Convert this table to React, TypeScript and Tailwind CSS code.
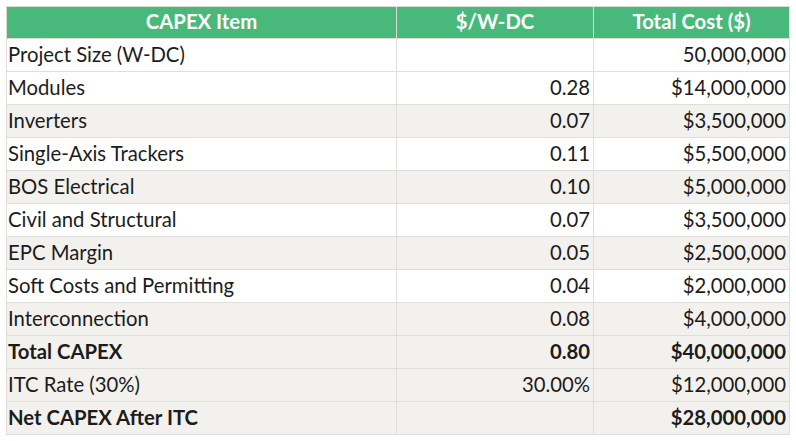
const rows = [
  { item: 'Project Size (W-DC)', rate: '', cost: '50,000,000', shade: false, bold: false },
  { item: 'Modules', rate: '0.28', cost: '$14,000,000', shade: false, bold: false },
  { item: 'Inverters', rate: '0.07', cost: '$3,500,000', shade: true, bold: false },
  { item: 'Single-Axis Trackers', rate: '0.11', cost: '$5,500,000', shade: false, bold: false },
  { item: 'BOS Electrical', rate: '0.10', cost: '$5,000,000', shade: true, bold: false },
  { item: 'Civil and Structural', rate: '0.07', cost: '$3,500,000', shade: false, bold: false },
  { item: 'EPC Margin', rate: '0.05', cost: '$2,500,000', shade: true, bold: false },
  { item: 'Soft Costs and Permitting', rate: '0.04', cost: '$2,000,000', shade: false, bold: false },
  { item: 'Interconnection', rate: '0.08', cost: '$4,000,000', shade: true, bold: false },
  { item: 'Total CAPEX', rate: '0.80', cost: '$40,000,000', shade: true, bold: true },
  { item: 'ITC Rate (30%)', rate: '30.00%', cost: '$12,000,000', shade: true, bold: false },
  { item: 'Net CAPEX After ITC', rate: '', cost: '$28,000,000', shade: true, bold: true },
]

export default function App() {
  return (
    <div className="min-h-screen bg-white pl-[6px] pt-[6px] font-['Lato','Liberation_Sans',sans-serif] text-[20.3px] text-[#1c1c1c]">
      <table className="border-collapse w-[783px] table-fixed">
        <colgroup>
          <col className="w-[390px]" />
          <col className="w-[197px]" />
          <col className="w-[196px]" />
        </colgroup>
        <thead>
          <tr className="h-[32px] bg-[#49b97b] text-white font-bold">
            <th className="border border-[#dcdcd9] pb-[2px] text-center font-bold leading-none">CAPEX Item</th>
            <th className="border border-[#dcdcd9] pb-[2px] text-center font-bold leading-none">$/W-DC</th>
            <th className="border border-[#dcdcd9] pb-[2px] text-center font-bold leading-none">Total Cost ($)</th>
          </tr>
        </thead>
        <tbody>
          {rows.map((r) => (
            <tr
              key={r.item}
              className={`h-[33px] ${r.shade ? 'bg-[#f2f1ee]' : 'bg-white'} ${r.bold ? 'font-bold' : 'font-normal'}`}
            >
              <td className="border border-[#dfdedb] pl-[1px] pr-[3px] pb-[2px] leading-none">{r.item}</td>
              <td className="border border-[#dfdedb] px-[3px] pb-[2px] text-right leading-none">{r.rate}</td>
              <td className="border border-[#dfdedb] px-[3px] pb-[2px] text-right leading-none">{r.cost}</td>
            </tr>
          ))}
        </tbody>
      </table>
    </div>
  )
}
